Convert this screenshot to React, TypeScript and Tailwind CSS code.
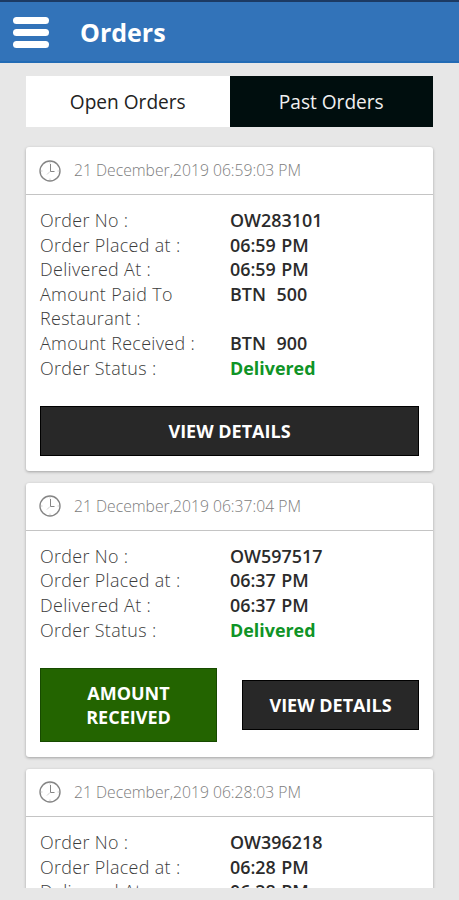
type Row = { label: string; value: string; green?: boolean }

type Order = {
  id: string
  date: string
  rows: Row[]
  received?: boolean
}

const orders: Order[] = [
  {
    id: "OW283101",
    date: "21 December,2019 06:59:03 PM",
    rows: [
      { label: "Order No :", value: "OW283101" },
      { label: "Order Placed at :", value: "06:59 PM" },
      { label: "Delivered At :", value: "06:59 PM" },
      { label: "Amount Paid To\nRestaurant :", value: "BTN  500" },
      { label: "Amount Received :", value: "BTN  900" },
      { label: "Order Status :", value: "Delivered", green: true },
    ],
  },
  {
    id: "OW597517",
    date: "21 December,2019 06:37:04 PM",
    received: true,
    rows: [
      { label: "Order No :", value: "OW597517" },
      { label: "Order Placed at :", value: "06:37 PM" },
      { label: "Delivered At :", value: "06:37 PM" },
      { label: "Order Status :", value: "Delivered", green: true },
    ],
  },
  {
    id: "OW396218",
    date: "21 December,2019 06:28:03 PM",
    rows: [
      { label: "Order No :", value: "OW396218" },
      { label: "Order Placed at :", value: "06:28 PM" },
      { label: "Delivered At :", value: "06:28 PM" },
      { label: "Order Status :", value: "Delivered", green: true },
    ],
  },
]

function ClockIcon() {
  return (
    <svg className="w-[22px] h-[22px] shrink-0" viewBox="0 0 22 22" fill="none" stroke="#858585">
      <circle cx="11" cy="11" r="10" strokeWidth="1.4" />
      <path d="M11.5 4V11.5H15.5" strokeWidth="1" />
      <path d="M11 2v1.5M11 18.5V20M2 11h1.5M18.5 11H20M8 14.5l3-3" strokeWidth="0.4" />
    </svg>
  )
}

function OrderCard({ order }: { order: Order }) {
  return (
    <article className="shrink-0 bg-white rounded-[3px] shadow-[0_1px_3px_rgba(0,0,0,0.3)]">
      <header className="flex items-center h-12 pl-[13px] border-b border-[#c4c4c4]">
        <ClockIcon />
        <span className="ml-[13px] pt-px text-[15.7px] font-light text-[#7c7c7c]">{order.date}</span>
      </header>
      <div className="px-3.5 pt-[13px] pb-[14.7px]">
        <dl>
          {order.rows.map((row) => (
            <div key={row.label} className="flex text-[17.9px] leading-[24.6px]">
              <dt className="w-[190px] whitespace-pre font-light tracking-[0.34px] text-[#3c3c3c]">{row.label}</dt>
              <dd
                className={`whitespace-pre [word-spacing:0.7px] ${row.green ? "font-bold text-[#0f9426]" : "font-semibold text-[#2b2b2b]"}`}
              >
                {row.value}
              </dd>
            </div>
          ))}
        </dl>
        <div className="flex items-center justify-between mt-[26px]">
          {order.received && (
            <button className="w-[177px] h-[74px] bg-[#236400] border border-[#174a00] text-white text-lg leading-6 font-bold">
              AMOUNT
              <br />
              RECEIVED
            </button>
          )}
          <button
            className={`h-[50px] bg-[#282828] border border-black text-white text-lg font-bold ${order.received ? "w-[177px]" : "w-full"}`}
          >
            VIEW DETAILS
          </button>
        </div>
      </div>
    </article>
  )
}

export default function App() {
  return (
    <div className="flex flex-col w-full h-[900px] overflow-hidden bg-[#e7e7e7] font-['Open_Sans',sans-serif]">
      <div className="h-[2px] shrink-0 bg-[#1c3a63]" />
      <nav className="flex items-center h-[61px] shrink-0 pt-[2px] pl-[13px] bg-[#3273b9] border-b-2 border-[#226bb5]">
        <button className="flex flex-col gap-[5px]" aria-label="Menu">
          <span className="w-[36px] h-[7px] rounded-full bg-white" />
          <span className="w-[36px] h-[7px] rounded-full bg-white" />
          <span className="w-[36px] h-[7px] rounded-full bg-white" />
        </button>
        <h1 className="ml-[31px] text-[25px] font-bold text-white">Orders</h1>
      </nav>
      <div className="flex shrink-0 h-[51px] mt-[13px] mx-[26px] text-[19.1px]">
        <button className="flex-1 pt-0.5 bg-white text-[#222]">Open Orders</button>
        <button className="flex-1 pt-0.5 bg-[#000e0e] text-[#f0f0f0]">Past Orders</button>
      </div>
      <main className="flex flex-col gap-3 h-[752px] px-[26px] mt-[9px] pt-[11px] mb-3 overflow-hidden">
        {orders.map((order) => (
          <OrderCard key={order.id} order={order} />
        ))}
      </main>
    </div>
  )
}
